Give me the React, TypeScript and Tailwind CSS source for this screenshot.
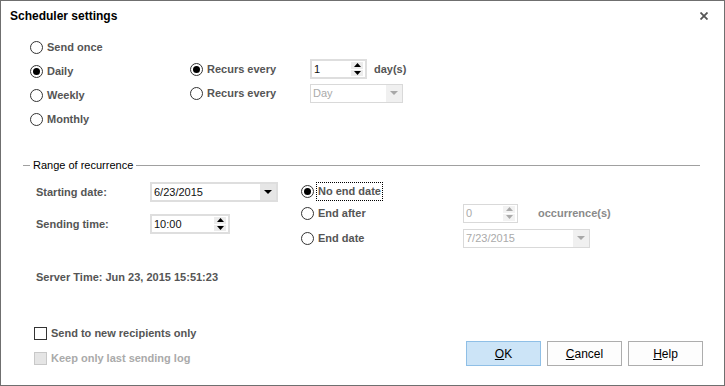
import React from 'react';

const font = { fontFamily: '"Liberation Sans", Arial, sans-serif' };

function Radio({ checked, label, focus }: { checked?: boolean; label: string; focus?: boolean }) {
  return (
    <div className="flex items-center">
      <span className="w-[13px] h-[13px] rounded-full border border-[#333] flex items-center justify-center bg-white shrink-0">
        {checked && <span className="w-[7px] h-[7px] rounded-full bg-black" />}
      </span>
      <span
        className={`ml-[2px] px-[1px] leading-[17px] text-[11px] font-bold text-[#555] border border-dotted ${
          focus ? 'border-black' : 'border-transparent'
        }`}
      >
        {label}
      </span>
    </div>
  );
}

function Arrow({ up, color = '#000' }: { up?: boolean; color?: string }) {
  return (
    <svg width="7" height="4" viewBox="0 0 7 4">
      {up ? <polygon points="0,4 7,4 3.5,0" fill={color} /> : <polygon points="0,0 7,0 3.5,4" fill={color} />}
    </svg>
  );
}

function Spin({ value, w, disabled }: { value: string; w: string; disabled?: boolean }) {
  return (
    <div
      className={`${w} flex items-stretch bg-white ${
        disabled ? 'h-[19px] border border-[#d9d9d9]' : 'h-[20px] border-2 border-[#dedede]'
      }`}
    >
      <span className={`flex-1 pl-[2px] text-[11px] leading-[16px] ${disabled ? 'text-[#aaa]' : 'text-[#111]'}`}>{value}</span>
      <div className="w-[12px] mr-[2px] flex flex-col justify-center gap-[1px] py-[1px]">
        <span className={`flex-1 flex items-center justify-center ${disabled ? 'bg-[#f2f2f2]' : 'bg-[#ececec]'}`}>
          <Arrow up color={disabled ? '#aaa' : '#000'} />
        </span>
        <span className={`flex-1 flex items-center justify-center ${disabled ? 'bg-[#f2f2f2]' : 'bg-[#ececec]'}`}>
          <Arrow color={disabled ? '#aaa' : '#000'} />
        </span>
      </div>
    </div>
  );
}

function Select({ value, w, disabled }: { value: string; w: string; disabled?: boolean }) {
  return (
    <div
      className={`${w} flex items-stretch bg-white ${
        disabled ? 'h-[19px] border border-[#d9d9d9]' : 'h-[20px] border-2 border-[#dedede]'
      }`}
    >
      <span className={`flex-1 pl-[2px] text-[11px] leading-[16px] ${disabled ? 'text-[#aaa]' : 'text-[#111]'}`}>{value}</span>
      <span className={`w-[16px] flex items-center justify-center ${disabled ? 'bg-[#f0f0f0]' : 'bg-[#e6e6e6]'}`}>
        <svg width="8" height="4" viewBox="0 0 8 4">
          <polygon points="0,0 8,0 4,4" fill={disabled ? '#a8a8a8' : '#000'} />
        </svg>
      </span>
    </div>
  );
}

function Check({ label, disabled }: { label: string; disabled?: boolean }) {
  return (
    <div className="h-[16px] flex items-center">
      <span
        className={`w-[13px] h-[13px] border ${disabled ? 'bg-[#e5e5e5] border-[#c8c8c8]' : 'bg-white border-[#333]'}`}
      />
      <span className={`ml-[4px] text-[11px] font-bold ${disabled ? 'text-[#aaa]' : 'text-[#555]'}`}>{label}</span>
    </div>
  );
}

function Btn({ first, rest, primary }: { first: string; rest: string; primary?: boolean }) {
  return (
    <button
      className={`w-[75px] h-[25px] border text-[12px] text-black ${
        primary ? 'bg-[#cce4f7] border-[#8fbfe6]' : 'bg-[#fdfdfd] border-[#adadad]'
      }`}
    >
      <span className="underline">{first}</span>
      {rest}
    </button>
  );
}

export default function App() {
  return (
    <div style={font} className="w-[725px] h-[386px] border border-[#6f6f6f] bg-white flex flex-col">
      <div className="h-[29px] shrink-0 flex items-center justify-between pl-[9px] pr-[16px]">
        <span className="text-[12px] font-bold text-black">Scheduler settings</span>
        <svg width="8" height="8" viewBox="0 0 8 8">
          <path d="M0.5 0.5 L7.5 7.5 M7.5 0.5 L0.5 7.5" stroke="#555" strokeWidth="1.8" />
        </svg>
      </div>

      <div className="flex pl-[29px] pt-[5px]">
        <div className="w-[160px] flex flex-col">
          {['Send once', 'Daily', 'Weekly', 'Monthly'].map((l) => (
            <div key={l} className="h-[24px] flex items-center">
              <Radio label={l} checked={l === 'Daily'} />
            </div>
          ))}
        </div>
        <div className="mt-[22px] flex flex-col">
          <div className="h-[24px] flex items-center">
            <div className="w-[120px]">
              <Radio label="Recurs every" checked />
            </div>
            <Spin value="1" w="w-[57px]" />
            <span className="ml-[7px] text-[11px] font-bold text-[#555]">day(s)</span>
          </div>
          <div className="h-[24px] flex items-center">
            <div className="w-[120px]">
              <Radio label="Recurs every" />
            </div>
            <Select value="Day" w="w-[93px]" disabled />
          </div>
        </div>
      </div>

      <div className="mt-[27px] h-[14px] flex items-center pl-[22px] pr-[24px]">
        <span className="w-[7px] h-px bg-[#a0a0a0]" />
        <span className="px-[3px] text-[11px] text-black">Range of recurrence</span>
        <span className="flex-1 h-px bg-[#a0a0a0]" />
      </div>

      <div className="flex pl-[35px]">
        <div className="w-[265px] flex flex-col">
          <div className="mt-[10px] h-[20px] flex items-center">
            <span className="w-[114px] text-[11px] font-bold text-[#555]">Starting date:</span>
            <Select value="6/23/2015" w="w-[128px]" />
          </div>
          <div className="mt-[12px] h-[20px] flex items-center">
            <span className="w-[114px] text-[11px] font-bold text-[#555]">Sending time:</span>
            <Spin value="10:00" w="w-[80px]" />
          </div>
          <div className="mt-[36px] h-[14px] flex items-center text-[11px] font-bold text-[#555]">
            Server Time: Jun 23, 2015 15:51:23
          </div>
        </div>
        <div className="flex flex-col">
          <div className="mt-[8px] h-[22px] flex items-center">
            <div className="w-[162px]">
              <Radio label="No end date" checked focus />
            </div>
          </div>
          <div className="h-[22px] flex items-center">
            <div className="w-[162px]">
              <Radio label="End after" />
            </div>
            <Spin value="0" w="w-[55px]" disabled />
            <span className="ml-[20px] text-[11px] font-bold text-[#8a8a8a]">occurrence(s)</span>
          </div>
          <div className="mt-[3px] h-[22px] flex items-center">
            <div className="w-[162px]">
              <Radio label="End date" />
            </div>
            <Select value="7/23/2015" w="w-[127px]" disabled />
          </div>
        </div>
      </div>

      <div className="mt-auto flex items-end justify-between pl-[33px] pr-[21px] pb-[19px]">
        <div className="flex flex-col gap-[9px]">
          <Check label="Send to new recipients only" />
          <Check label="Keep only last sending log" disabled />
        </div>
        <div className="flex gap-[6px]">
          <Btn first="O" rest="K" primary />
          <Btn first="C" rest="ancel" />
          <Btn first="H" rest="elp" />
        </div>
      </div>
    </div>
  );
}
